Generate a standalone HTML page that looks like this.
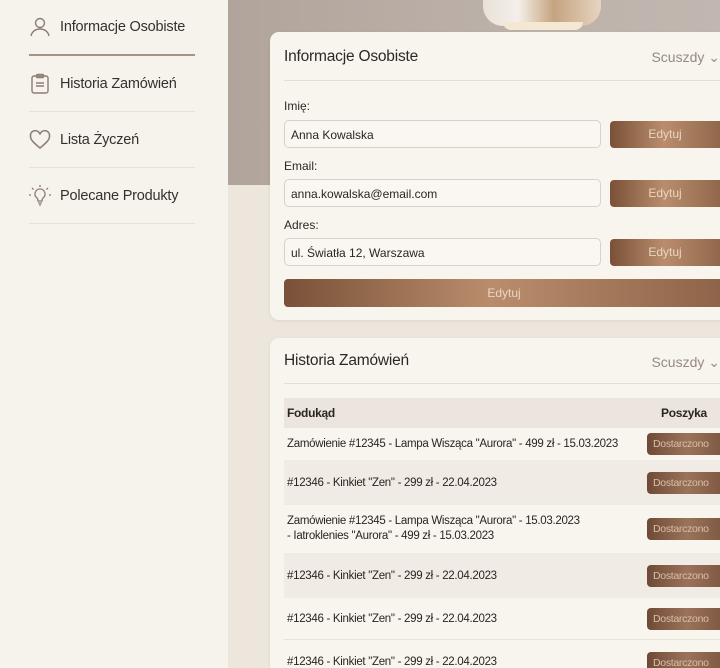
<!DOCTYPE html>
<html style="width:720px;height:668px;overflow:hidden"><head><meta charset="utf-8"><style>
*{margin:0;padding:0;box-sizing:border-box}
body{width:720px;height:668px;overflow:hidden;background:#ede6dd;font-family:"Liberation Sans",sans-serif;color:#2e2824;position:relative}
.side{position:absolute;left:0;top:0;width:228px;height:668px;background:#f6f2ec}
.nav{position:absolute;left:29px;width:166px;height:56px;display:flex;align-items:center;font-size:14.5px;color:#35302b;border-bottom:1px solid #e6e0d8;letter-spacing:-.2px}
.nav svg{margin-right:9px}
.bg{position:absolute;left:228px;top:0;width:492px;height:185px;background:linear-gradient(90deg,#b1a49b,#bdb2aa 60%,#c1b7b0)}
.card{position:absolute;left:270px;width:470px;background:#f8f4ee;border-radius:9px;box-shadow:0 1px 3px rgba(0,0,0,.08);overflow:hidden}
.title{position:absolute;left:14px;font-size:15.5px;color:#2e2824;letter-spacing:-.2px}
.sc{position:absolute;right:20px;font-size:14px;color:#958b83}
.sep{position:absolute;left:14px;right:0;height:1px;background:#e4ddd4}
.lbl{position:absolute;left:14px;font-size:12px;color:#2e2824}
.inp{position:absolute;left:14px;width:317px;height:28px;border:1px solid #d8d1c8;border-radius:5px;background:#faf7f2;font-size:12px;padding:7px 6px;color:#2a2521}
.btn{position:absolute;left:340px;width:120px;height:27px;border-radius:4px;background:linear-gradient(90deg,#7a5138,#b98d6c 45%,#8a6046);color:#e9d6c3;font-size:12px;text-align:center;line-height:27px;padding-right:10px}
.row{position:absolute;left:14px;right:0;font-size:11.5px;color:#2a2521;padding-left:3px;display:flex;align-items:center;letter-spacing:-.3px}
.badge{position:absolute;left:377px;width:80px;height:22px;border-radius:4px;background:linear-gradient(90deg,#6e4a36,#9b735a 50%,#7b5540);color:#d9bfa9;font-size:10.5px;line-height:22px;padding-left:6px}
</style></head><body>
<div class="side">
 <div class="nav" style="top:0;border-bottom:2px solid #a89384"><svg width="22" height="22" viewBox="0 0 22 22" fill="none" stroke="#8d7d72" stroke-width="1.4"><circle cx="11" cy="7" r="4.5"/><path d="M2 20c1-5 5-7 9-7s8 2 9 7"/></svg>Informacje Osobiste</div>
 <div class="nav" style="top:56px"><svg width="22" height="22" viewBox="0 0 22 22" fill="none" stroke="#8d7d72" stroke-width="1.4"><rect x="3" y="3" width="16" height="17" rx="2"/><rect x="7.5" y="1.5" width="7" height="3" rx="1"/><path d="M7 10h8M7 13h8"/></svg>Historia Zamówień</div>
 <div class="nav" style="top:112px"><svg width="22" height="22" viewBox="0 0 22 22" fill="none" stroke="#8d7d72" stroke-width="1.5"><path d="M11 19C5 14 1.5 11 1.5 7.5A4.5 4.5 0 0 1 11 5.5a4.5 4.5 0 0 1 9.5 2C20.5 11 17 14 11 19z"/></svg>Lista Życzeń</div>
 <div class="nav" style="top:168px"><svg width="22" height="22" viewBox="0 0 22 22" fill="none" stroke="#8d7d72" stroke-width="1.3"><path d="M11 4a5 5 0 0 0-3 9c1 1 1 2 1 3h4c0-1 0-2 1-3a5 5 0 0 0-3-9zM9 18h4M10 20h2M11 0v2M3 3l1.5 1.5M19 3l-1.5 1.5M0 10h2M20 10h2"/></svg>Polecane Produkty</div>
</div>
<div class="bg"></div>
<div style="position:absolute;left:483px;top:0;width:118px;height:26px;border-radius:0 0 20px 20px;background:linear-gradient(90deg,#e8e2da,#f4efe8 30%,#c5a37f 60%,#e6d5c0)"></div>
<div style="position:absolute;left:503px;top:22px;width:80px;height:8px;border-radius:0 0 30px 30px;background:#f5e8d3"></div>

<div class="card" style="top:32px;height:288px">
 <div class="title" style="top:16px">Informacje Osobiste</div>
 <div class="sc" style="top:17px">Scuszdy ⌄</div>
 <div class="sep" style="top:48px"></div>
 <div class="lbl" style="top:67px">Imię:</div>
 <div class="inp" style="top:88px">Anna Kowalska</div>
 <div class="btn" style="top:89px">Edytuj</div>
 <div class="lbl" style="top:127px">Email:</div>
 <div class="inp" style="top:147px">anna.kowalska@email.com</div>
 <div class="btn" style="top:148px">Edytuj</div>
 <div class="lbl" style="top:186px">Adres:</div>
 <div class="inp" style="top:206px">ul. Światła 12, Warszawa</div>
 <div class="btn" style="top:207px">Edytuj</div>
 <div class="btn" style="top:247px;left:14px;width:460px;padding-right:20px;height:28px;line-height:28px">Edytuj</div>
</div>

<div class="card" style="top:338px;height:330px;border-radius:9px 9px 0 0">
 <div class="title" style="top:14px">Historia Zamówień</div>
 <div class="sc" style="top:16px">Scuszdy ⌄</div>
 <div class="sep" style="top:45px"></div>
 <div class="row" style="top:60px;height:30px;background:#ebe5dd;font-weight:bold;font-size:12px">Fodukąd<span style="position:absolute;left:377px">Poszyka</span></div>
 <div class="row" style="top:90px;height:32px">Zamówienie #12345 - Lampa Wisząca "Aurora" - 499 zł - 15.03.2023<div class="badge" style="top:5px;left:363px">Dostarczono</div></div>
 <div class="row" style="top:122px;height:45px;background:#f0ebe4">#12346 - Kinkiet "Zen" - 299 zł - 22.04.2023<div class="badge" style="top:12px;left:363px">Dostarczono</div></div>
 <div class="row" style="top:167px;height:48px;line-height:15px">Zamówienie #12345 - Lampa Wisząca "Aurora" - 15.03.2023<br>- Iatroklenies "Aurora" - 499 zł - 15.03.2023<div class="badge" style="top:13px;left:363px">Dostarczono</div></div>
 <div class="row" style="top:215px;height:45px;background:#f0ebe4">#12346 - Kinkiet "Zen" - 299 zł - 22.04.2023<div class="badge" style="top:12px;left:363px">Dostarczono</div></div>
 <div class="row" style="top:260px;height:42px;border-bottom:1px solid #e8e2da">#12346 - Kinkiet "Zen" - 299 zł - 22.04.2023<div class="badge" style="top:10px;left:363px">Dostarczono</div></div>
 <div class="row" style="top:302px;height:44px">#12346 - Kinkiet "Zen" - 299 zł - 22.04.2023<div class="badge" style="top:12px;left:363px">Dostarczono</div></div>
</div>
</body></html>
